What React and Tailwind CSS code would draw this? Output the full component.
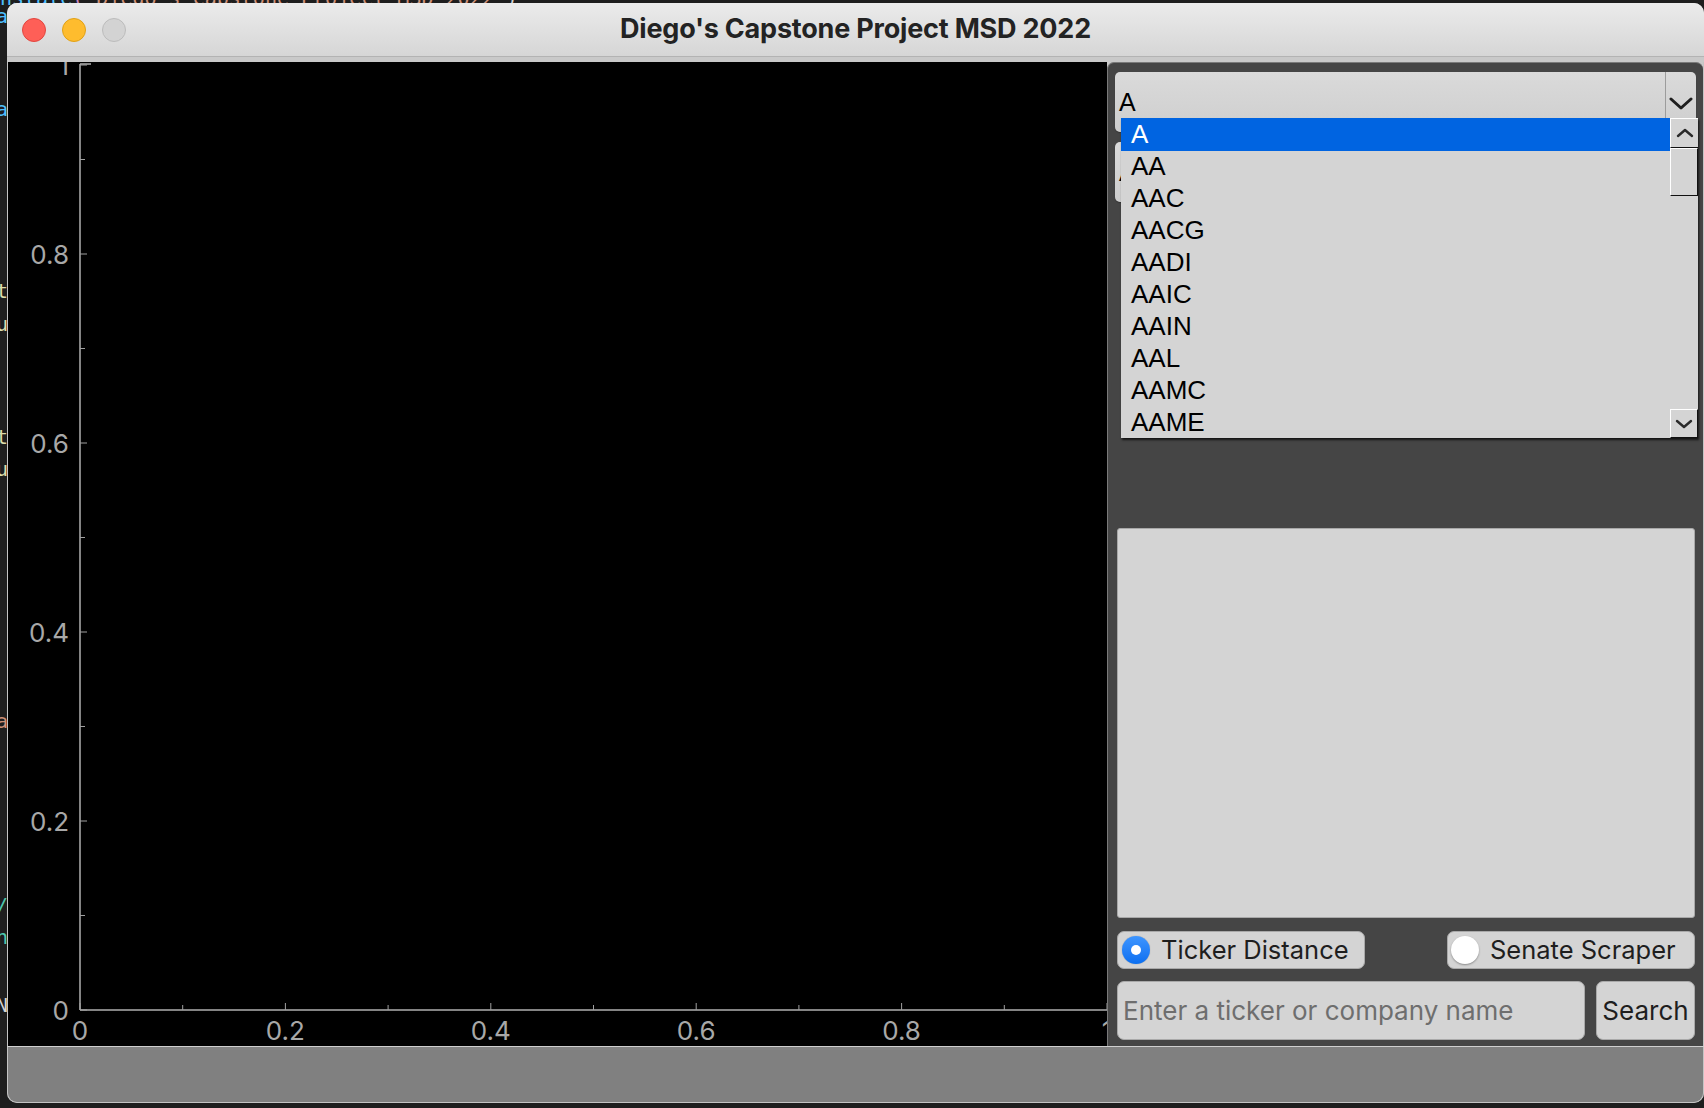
import React from "react";

const items = ["A", "AA", "AAC", "AACG", "AADI", "AAIC", "AAIN", "AAL", "AAMC", "AAME"];

function Chevron({ dir = "down", w = 24, h = 12, stroke = 3, color = "#222" }) {
  const d = dir === "down" ? `M2 2 L${w / 2} ${h - 2} L${w - 2} 2` : `M2 ${h - 2} L${w / 2} 2 L${w - 2} ${h - 2}`;
  return (
    <svg width={w} height={h} viewBox={`0 0 ${w} ${h}`}>
      <path d={d} fill="none" stroke={color} strokeWidth={stroke} strokeLinecap="round" strokeLinejoin="round" />
    </svg>
  );
}

function Plot() {
  const W = 1099;
  const H = 984;
  const ox = 72;
  const oy = 948;
  const sx = 1027;
  const sy = 945;
  const ticks = [0, 1, 2, 3, 4, 5, 6, 7, 8, 9, 10];
  const labels = ["0", "0.2", "0.4", "0.6", "0.8", "1"];
  return (
    <svg width={W} height={H} className="block">
      <rect x="0" y="0" width={W} height={H} fill="#000" />
      <line x1={ox} y1={2} x2={ox} y2={oy} stroke="#b0b0b0" strokeWidth="1.5" />
      <line x1={ox} y1={oy} x2={W} y2={oy} stroke="#b0b0b0" strokeWidth="1.5" />
      <line x1={ox} y1={2} x2={ox + 11} y2={2} stroke="#b0b0b0" strokeWidth="1.5" />
      {ticks.map((t) => {
        const v = t / 10;
        const major = t % 2 === 0;
        const len = major ? 7 : 5;
        const y = oy - v * sy;
        const x = ox + v * sx;
        return (
          <g key={t}>
            <line x1={ox} y1={y} x2={ox + len} y2={y} stroke="#a0a0a0" strokeWidth="1" />
            <line x1={x} y1={oy} x2={x} y2={oy - len} stroke="#a0a0a0" strokeWidth="1" />
          </g>
        );
      })}
      {labels.map((l, i) => {
        const v = i * 0.2;
        return (
          <g key={l}>
            <text x={61} y={oy - v * sy} textAnchor="end" dominantBaseline="central" fill="#a8a8a8" fontSize="26" fontFamily="Inter, sans-serif">
              {l}
            </text>
            <text x={ox + v * sx} y={968} textAnchor="middle" dominantBaseline="central" fill="#a8a8a8" fontSize="26" fontFamily="Inter, sans-serif">
              {l}
            </text>
          </g>
        );
      })}
    </svg>
  );
}

function Combo({ text }) {
  return (
    <div className="h-[60px] -ml-[2px] -mr-[1px] rounded-[5px] bg-gradient-to-b from-[#dadada] to-[#cecece] flex items-center overflow-hidden shadow-[0_1px_1px_rgba(0,0,0,0.25)]">
      <span className="flex-1 pl-[4px] pt-[2px] text-[25px] text-black font-['Liberation_Sans',Arial,sans-serif]">{text}</span>
      <div className="w-[31px] h-full border-l border-[#9c9c9c] flex items-center justify-center pt-[3px]">
        <Chevron dir="down" w={24} h={13} stroke={3} color="#1f1f1f" />
      </div>
    </div>
  );
}

function DropList() {
  return (
    <div className="absolute left-[13px] top-[55px] w-[577px] h-[320px] bg-[#d4d4d4] flex shadow-[1px_2px_2px_rgba(0,0,0,0.7)]">
      <div className="flex-1 flex flex-col">
        {items.map((t, i) => (
          <div
            key={t}
            className={
              i === 0
                ? "h-[33px] bg-[#0064e1] text-white flex items-center pl-[10px] text-[26px] font-['Liberation_Sans',Arial,sans-serif]"
                : "h-[31.9px] text-black flex items-center pl-[10px] text-[26px] font-['Liberation_Sans',Arial,sans-serif]"
            }
          >
            {t}
          </div>
        ))}
      </div>
      <div className="w-[28px] flex flex-col">
        <div className="h-[30px] border-t border-l border-white border-b border-b-[#111] flex items-center justify-center">
          <Chevron dir="up" w={18} h={10} stroke={2.4} color="#2a2a2a" />
        </div>
        <div className="h-[48px] border-t border-l border-white border-b border-r border-b-[#111] border-r-[#111]" />
        <div className="flex-1" />
        <div className="h-[29px] border-t border-l border-white border-b border-r border-b-[#111] border-r-[#111] flex items-center justify-center">
          <Chevron dir="down" w={18} h={10} stroke={2.4} color="#2a2a2a" />
        </div>
      </div>
    </div>
  );
}

function Radio({ checked, label }) {
  return (
    <div className="w-[248px] h-[38px] rounded-[7px] bg-[#d4d4d4] border border-[#a9a9a9] flex items-center">
      {checked ? (
        <div className="ml-[4px] w-[28px] h-[28px] rounded-full bg-gradient-to-b from-[#3d95ff] to-[#0a6ff0] flex items-center justify-center shadow-[0_0_1px_rgba(0,0,0,0.4)]">
          <div className="w-[10px] h-[10px] rounded-full bg-white" />
        </div>
      ) : (
        <div className="ml-[3px] w-[28px] h-[28px] rounded-full bg-white shadow-[0_1px_2px_rgba(0,0,0,0.35)]" />
      )}
      <span className="ml-[11px] text-[25.5px] leading-none text-[#1e1e1e] font-['Inter',sans-serif] whitespace-nowrap">{label}</span>
    </div>
  );
}

function Panel() {
  return (
    <div className="relative flex-1 bg-[#454545] rounded-t-[7px] border-l border-t border-[#7a7a7a] flex flex-col pl-[9px] pr-[8px] pt-[9px]">
      <Combo text="A" />
      <div className="h-[10px]" />
      <Combo text="A" />
      <div className="mt-[326px] h-[390px] bg-[#d4d4d4] rounded-[3px] border border-[#a8a8a8]" />
      <div className="mt-[13px] flex justify-between">
        <Radio checked label="Ticker Distance" />
        <Radio checked={false} label="Senate Scraper" />
      </div>
      <div className="mt-[12px] flex gap-[11px] h-[59px]">
        <div className="flex-1 rounded-[7px] bg-[#d4d4d4] border border-[#a9a9a9] flex items-center pl-[5px]">
          <span className="text-[26px] text-[#6e6e6e] font-['Inter',sans-serif] whitespace-nowrap">Enter a ticker or company name</span>
        </div>
        <div className="w-[99px] rounded-[7px] bg-[#d4d4d4] border border-[#a9a9a9] flex items-center justify-center">
          <span className="text-[26px] text-[#1e1e1e] font-['Inter',sans-serif]">Search</span>
        </div>
      </div>
      <DropList />
    </div>
  );
}

function Backdrop() {
  const frags = [
    { top: 6, text: "a", c: "text-[#4fc1ff]" },
    { top: 99, text: "a", c: "text-[#4fc1ff]" },
    { top: 281, text: "t", c: "text-[#dcdcaa]" },
    { top: 314, text: "u", c: "text-[#dcdcaa]" },
    { top: 427, text: "t", c: "text-[#dcdcaa]" },
    { top: 459, text: "u", c: "text-[#dcdcaa]" },
    { top: 711, text: "a", c: "text-[#ce9178]" },
    { top: 895, text: "/", c: "text-[#4ec9b0]" },
    { top: 927, text: "n", c: "text-[#4ec9b0]" },
    { top: 995, text: "N", c: "text-[#d4d4d4]" },
  ];
  return (
    <div className="absolute inset-0 font-['DejaVu_Sans_Mono',monospace] text-[20px] leading-none">
      <div className="absolute left-0 top-[-12px] whitespace-nowrap">
        <span className="text-[#4fc1ff]">nstate</span>
        <span className="text-[#c586c0]">(</span>
        <span className="text-[#ce9178]">"Diego's Capstone Project MSD 2022"</span>
        <span className="text-[#d4d4d4]">)</span>
      </div>
      {frags.map((f, i) => (
        <div key={i} className={`absolute left-[-4px] ${f.c}`} style={{ top: f.top }}>
          {f.text}
        </div>
      ))}
    </div>
  );
}

export default function App() {
  return (
    <div className="relative w-[1704px] h-[1108px] bg-[#1e1e1e] overflow-hidden">
      <Backdrop />
      <div className="absolute left-[7px] top-[3px] w-[1697px] h-[1100px] rounded-[10px] overflow-hidden flex flex-col bg-[#c9c9c9]">
        <div className="h-[53px] bg-gradient-to-b from-[#ebebeb] to-[#d6d6d6] flex items-center relative">
          <div className="flex items-center gap-[16px] pl-[15px]">
            <div className="w-[24px] h-[24px] rounded-full bg-[#fe5f57] border border-[#e2463f]" />
            <div className="w-[24px] h-[24px] rounded-full bg-[#febc2e] border border-[#e1a116]" />
            <div className="w-[24px] h-[24px] rounded-full bg-[#d3d3d3] border border-[#bcbcbc]" />
          </div>
          <div className="absolute inset-0 flex items-center justify-center pointer-events-none">
            <span className="text-[27px] font-bold text-[#232323] font-['Inter',sans-serif] tracking-[-0.2px]">Diego's Capstone Project MSD 2022</span>
          </div>
        </div>
        <div className="h-[1px] bg-[#b3b3b3]" />
        <div className="h-[5px] bg-[#c9c9c9]" />
        <div className="h-[984px] flex border-l border-r border-[#c4c4c4] bg-[#c9c9c9]">
          <div className="w-[1099px] h-full overflow-hidden bg-black">
            <Plot />
          </div>
          <Panel />
        </div>
        <div className="h-[1px] bg-[#cfcfcf]" />
        <div className="flex-1 bg-[#808080] border-l border-r border-b border-[#c4c4c4] rounded-b-[10px]" />
      </div>
    </div>
  );
}
